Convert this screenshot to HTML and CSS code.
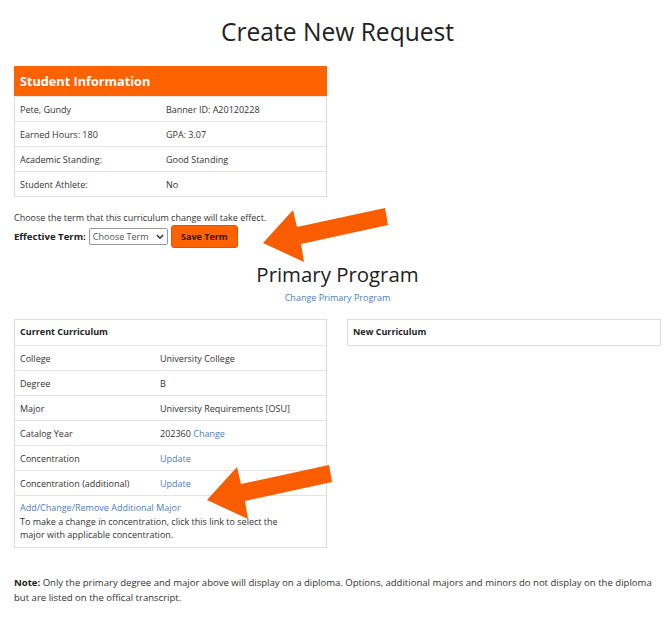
FILE: index.html
```html
<!DOCTYPE html>
<html lang="en">
<head>
<meta charset="utf-8">
<title>Create New Request</title>
<link rel="stylesheet" href="styles.css">
</head>
<body>
<div class="page">
  <h1 class="title">Create New Request</h1>

  <div class="box info">
    <div class="info-head">Student Information</div>
    <div class="row"><span>Pete, Gundy</span><span>Banner ID: A20120228</span></div>
    <div class="row"><span>Earned Hours: 180</span><span>GPA: 3.07</span></div>
    <div class="row"><span>Academic Standing:</span><span>Good Standing</span></div>
    <div class="row"><span>Student Athlete:</span><span>No</span></div>
  </div>

  <p class="choose">Choose the term that this curriculum change will take effect.</p>
  <div class="term-row">
    <span class="term-label">Effective Term:</span>
    <span class="select">Choose Term <svg class="chev" viewBox="0 0 10 6" width="8" height="5"><path d="M1 1 L5 5 L9 1" fill="none" stroke="#333" stroke-width="1.8"/></svg></span>
    <span class="btn">Save Term</span>
  </div>

  <h2 class="sub">Primary Program</h2>
  <div class="center-link"><a class="link" href="#">Change Primary Program</a></div>

  <div class="curricula">
    <div class="box cur">
      <div class="cur-head">Current Curriculum</div>
      <div class="row c"><span>College</span><span>University College</span></div>
      <div class="row c"><span>Degree</span><span>B</span></div>
      <div class="row c"><span>Major</span><span>University Requirements [OSU]</span></div>
      <div class="row c"><span>Catalog Year</span><span>202360 <a class="link" href="#">Change</a></span></div>
      <div class="row c"><span>Concentration</span><span><a class="link" href="#">Update</a></span></div>
      <div class="row c"><span>Concentration (additional)</span><span><a class="link" href="#">Update</a></span></div>
      <div class="last-cell">
        <a class="link" href="#">Add/Change/Remove Additional Major</a><br>
        To make a change in concentration, click this link to select the major with applicable concentration.
      </div>
    </div>
    <div class="box newcur">
      <div class="cur-head">New Curriculum</div>
    </div>
  </div>

  <p class="note"><b class="note-label">Note:</b> Only the primary degree and major above will display on a diploma. Options, additional majors and minors do not display on the diploma but are listed on the offical transcript.</p>

  <svg class="arrows" viewBox="0 0 667 619" width="667" height="619">
    <polygon fill="#fa5c00" points="263,243 293,210 297,227 385,208 388,225 301,244 304,262"/>
    <polygon fill="#fa5c00" points="207,500 237,467 241,484 329,465 332,482 245,501 248,519"/>
  </svg>
</div>
</body>
</html>
```

FILE: styles.css
```css
* { box-sizing: border-box; }
html, body { margin: 0; padding: 0; background: #fff; }
body {
  font-family: "Open Sans", "Noto Sans", sans-serif;
  font-size: 9px;
  color: #333;
}
.page {
  position: relative;
  width: 667px;
  height: 619px;
  padding: 16px 6px 0 14px;
}
.title {
  margin: 0;
  font-size: 24.6px;
  line-height: 32px;
  font-weight: 400;
  color: #222;
  text-align: center;
}
.box {
  border: 1px solid #dcdcdc;
  background: #fff;
}
.info {
  width: 313px;
  margin-top: 18px;
}
.info-head {
  height: 30px;
  background: #ff6200;
  color: #fff;
  font-weight: 700;
  font-size: 12.7px;
  line-height: 30px;
  padding-left: 6px;
  margin: -1px -1px 0;
}
.row {
  display: grid;
  grid-template-columns: 146px 1fr;
  height: 25px;
  align-items: center;
  border-top: 1px solid #e4e4e4;
  padding-left: 5px;
}
.row.c { grid-template-columns: 140px 1fr; }
.info .row:first-of-type { border-top: none; }
.choose {
  margin: 14px 0 0;
  line-height: 14px;
}
.term-row {
  display: flex;
  align-items: center;
  height: 23px;
  gap: 3px;
}
.term-label { font-weight: 700; color: #222; font-size: 9.6px; }
.select {
  display: inline-flex;
  align-items: center;
  justify-content: space-between;
  width: 79px;
  height: 17px;
  border: 1px solid #999;
  border-radius: 2px;
  padding: 0 3px 0 3px;
  color: #555;
  background: #fff;
}
.btn {
  display: inline-flex;
  align-items: center;
  justify-content: center;
  width: 67px;
  height: 23px;
  background: #ff6200;
  border: 1px solid #e35300;
  border-radius: 3px;
  color: #3a1600;
  font-weight: 700;
}
.sub {
  margin: 13px 0 0;
  font-size: 20.4px;
  line-height: 26px;
  font-weight: 400;
  color: #222;
  text-align: center;
}
.center-link {
  margin-top: 4px;
  line-height: 14px;
  text-align: center;
}
.link { color: #4a7fc1; text-decoration: none; }
.curricula {
  display: flex;
  align-items: flex-start;
  gap: 20px;
  margin-top: 14px;
}
.cur { width: 313px; }
.newcur { width: 314px; }
.cur-head {
  height: 25px;
  line-height: 24px;
  padding-left: 5px;
  font-weight: 700;
  color: #222;
}
.last-cell {
  border-top: 1px solid #e4e4e4;
  height: 52px;
  padding: 5px 30px 0 5px;
  line-height: 13.5px;
}
.note {
  margin: 27px 0 0;
  line-height: 15px;
  font-size: 9.55px;
}
.note-label { color: #222; }
.arrows {
  position: absolute;
  top: 0;
  left: 0;
  pointer-events: none;
}
```
